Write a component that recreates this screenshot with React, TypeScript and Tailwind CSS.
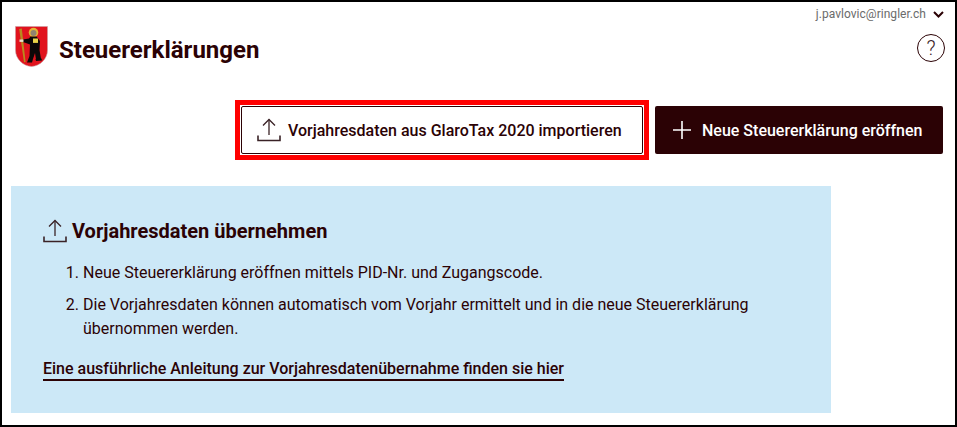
import React from "react";

function UploadIcon({ className }: { className?: string }) {
    return (
        <svg className={className} viewBox="0 0 24 24" fill="none" stroke="#3a2226" strokeWidth="1.3">
            <path d="M12 1.5V17" />
            <path d="M6 7.5L12 1.5L18 7.5" />
            <path d="M1 17.5V22.5H23V17.5" strokeWidth="1.6" />
        </svg>
    );
}

function Crest() {
    return (
        <svg width="33" height="41" viewBox="0 0 33 41">
            <path d="M0.5 0.5H32.5V24C32.5 33 25 40 16.5 40.5C8 40 0.5 33 0.5 24Z" fill="#e1131d" stroke="#c9a0a2" strokeWidth="0.6" />
            <path d="M4.2 3L6.8 2.6L10.6 36L9 36.2Z" fill="#b98a1e" />
            <circle cx="18.5" cy="6.6" r="4.8" fill="#e2b436" />
            <circle cx="18.5" cy="7" r="3" fill="#8f8370" />
            <path d="M15.5 10.5H21.5L25 15L24.5 24L26 33L21 33.5L20 27L18 33L17 36.5L12 36.5L14.5 30L15 18.5L8 16V13.5L14 12.5Z" fill="#0c0808" />
            <rect x="4.5" y="13.5" width="4" height="2.4" fill="#e9dfcb" />
            <rect x="18" y="12.5" width="5" height="4.4" fill="#ead54a" />
            <path d="M20.5 33L26.5 32.6L27 34.5L21 35Z" fill="#0c0808" />
        </svg>
    );
}

export default function App() {
    return (
        <div className="h-[427px] w-[957px] overflow-hidden border-2 border-black bg-white font-['Roboto',sans-serif] text-[#2b0205]">
            {/* Header */}
            <div className="flex h-[98px] items-start justify-between">
                <div className="mt-[24px] ml-[13px] flex items-center">
                    <Crest />
                    <h1 className="mt-[7px] ml-[11px] text-[24px] leading-[30px] font-bold">Steuererklärungen</h1>
                </div>
                <div className="mr-[10px] flex flex-col items-end">
                    <div className="mt-[5px] flex items-center">
                        <span className="text-[12px] leading-[14px] tracking-[0.03px] text-[#6b6b6b]">j.pavlovic@ringler.ch</span>
                        <svg className="mr-[1px] ml-[7px]" width="11" height="7" viewBox="0 0 11 7" fill="none" stroke="#2b0205" strokeWidth="2">
                            <path d="M1 1L5.5 5.5L10 1" />
                        </svg>
                    </div>
                    <div className="mt-[13px] flex h-[28px] w-[28px] items-center justify-center rounded-full border border-[#2b0205] text-[20px] leading-none font-light text-[#3a2226]">
                        ?
                    </div>
                </div>
            </div>

            {/* Actions */}
            <div className="mr-[12px] flex justify-end gap-[6px]">
                <div className="border-[5px] border-[#ff0000] bg-white p-px">
                    <button className="flex h-[48px] w-[402px] items-center rounded-[2px] border border-[#2b0205] bg-white pl-[15px] text-[16px] font-medium">
                        <UploadIcon className="h-[24px] w-[24px]" />
                        <span className="mt-[1px] ml-[7px]">Vorjahresdaten aus GlaroTax 2020 importieren</span>
                    </button>
                </div>
                <button className="mt-[6px] flex h-[48px] w-[288px] items-center rounded-[2px] bg-[#2b0205] pl-[18px] text-[16px] font-medium text-white">
                    <svg width="18" height="18" viewBox="0 0 18 18" stroke="white" strokeWidth="1.6">
                        <path d="M9 0V18M0 9H18" />
                    </svg>
                    <span className="mt-[1px] ml-[11px]">Neue Steuererklärung eröffnen</span>
                </button>
            </div>

            {/* Info panel */}
            <div className="mt-[26px] ml-[9px] h-[227px] w-[820px] bg-[#cce8f7] px-[32px] pt-[32px]">
                <div className="flex items-center">
                    <UploadIcon className="h-[24px] w-[24px]" />
                    <h2 className="ml-[5px] text-[20px] leading-[26px] font-bold">Vorjahresdaten übernehmen</h2>
                </div>
                <ol className="mt-[17px] ml-[24px] list-decimal pl-[16px] text-[16px] leading-[24px] text-[#2b0205]">
                    <li>Neue Steuererklärung eröffnen mittels PID-Nr. und Zugangscode.</li>
                    <li className="mt-[8px] w-[710px]">
                        Die Vorjahresdaten können automatisch vom Vorjahr ermittelt und in die neue Steuererklärung übernommen werden.
                    </li>
                </ol>
                <a className="mt-[17px] inline-block border-b-2 border-[#2b0205] text-[16px] leading-[21px] font-medium">
                    Eine ausführliche Anleitung zur Vorjahresdatenübernahme finden sie hier
                </a>
            </div>
        </div>
    );
}
